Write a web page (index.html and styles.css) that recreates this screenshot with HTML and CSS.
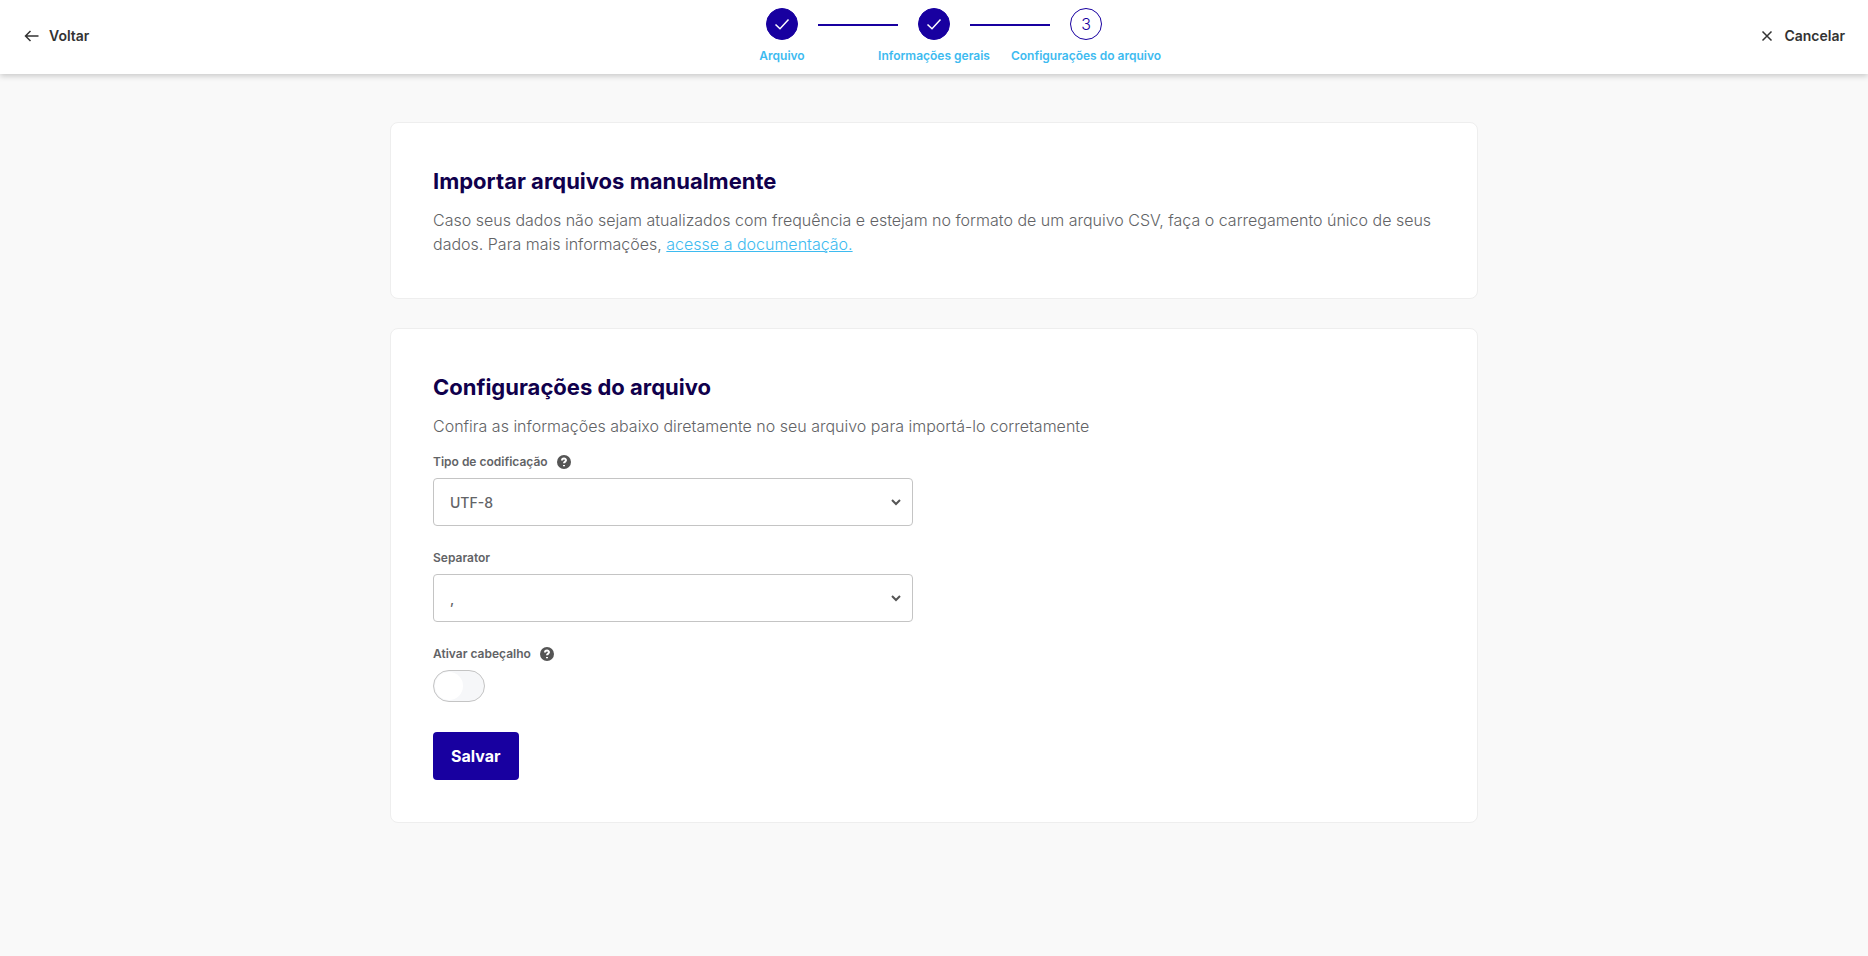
FILE: index.html
```html
<!DOCTYPE html>
<html lang="pt-BR">
<head>
<meta charset="utf-8">
<meta name="viewport" content="width=device-width, initial-scale=1">
<title>Importar arquivos manualmente</title>
<link rel="stylesheet" href="styles.css">
</head>
<body>
<header class="topbar">
  <button class="nav-button" type="button">
    <svg class="nav-icon" viewBox="0 0 16 16" aria-hidden="true"><path d="M15.500 8H2.500M7.500 3 2.500 8 7.500 13"/></svg>
    Voltar
  </button>
  <ol class="steps">
    <li class="step">
      <span class="step-mark step-done"><svg class="check" viewBox="0 0 16 16" aria-hidden="true"><path d="M1.500 8.500 6 12.800 14.500 3.500"/></svg></span>
      <span class="step-label">Arquivo</span>
    </li>
    <li class="step">
      <span class="step-mark step-done"><svg class="check" viewBox="0 0 16 16" aria-hidden="true"><path d="M1.500 8.500 6 12.800 14.500 3.500"/></svg></span>
      <span class="step-label">Informações gerais</span>
    </li>
    <li class="step" aria-current="step">
      <span class="step-mark">3</span>
      <span class="step-label">Configurações do arquivo</span>
    </li>
  </ol>
  <button class="nav-button nav-cancel" type="button">
    <svg class="nav-icon" viewBox="0 0 16 16" aria-hidden="true"><path d="M4.500 3.500l9 9M13.500 3.500l-9 9"/></svg>
    Cancelar
  </button>
</header>
<main class="content">
  <section class="card">
    <h1 class="title">Importar arquivos manualmente</h1>
    <p class="text">Caso seus dados não sejam atualizados com frequência e estejam no formato de um arquivo CSV, faça o carregamento único de seus dados. Para mais informações, <a class="link" href="#">acesse a documentação.</a></p>
  </section>
  <section class="card">
    <h2 class="title">Configurações do arquivo</h2>
    <p class="text">Confira as informações abaixo diretamente no seu arquivo para importá-lo corretamente</p>
    <form class="form">
      <div class="field">
        <div class="label-row">
          <label for="encoding">Tipo de codificação</label>
          <svg class="help" viewBox="0 0 14 14" aria-hidden="true"><circle cx="7" cy="7" r="7"/><path d="M5 5.400C5 2.800 9 2.800 9 5.300 9 6.600 7 6.700 7 8.300M7 10v1.200"/></svg>
        </div>
        <div class="select-wrap">
          <select class="select" id="encoding"><option>UTF-8</option></select>
          <svg class="chevron" viewBox="0 0 12 12" aria-hidden="true"><path d="M2 4l4 4 4-4"/></svg>
        </div>
      </div>
      <div class="field">
        <div class="label-row"><label for="separator">Separator</label></div>
        <div class="select-wrap">
          <select class="select" id="separator"><option>,</option></select>
          <svg class="chevron" viewBox="0 0 12 12" aria-hidden="true"><path d="M2 4l4 4 4-4"/></svg>
        </div>
      </div>
      <div class="field">
        <div class="label-row">
          <label for="header">Ativar cabeçalho</label>
          <svg class="help" viewBox="0 0 14 14" aria-hidden="true"><circle cx="7" cy="7" r="7"/><path d="M5 5.400C5 2.800 9 2.800 9 5.300 9 6.600 7 6.700 7 8.300M7 10v1.200"/></svg>
        </div>
        <input class="toggle" id="header" type="checkbox" role="switch">
      </div>
      <button class="save" type="submit">Salvar</button>
    </form>
  </section>
</main>
</body>
</html>
```
FILE: styles.css
```css
* { box-sizing: border-box; }

body {
  margin: 0;
  min-height: 100vh;
  background: #f9f9f9;
  color: #626366;
  font-family: Inter, "Open Sans", sans-serif;
  font-size: 16px;
}

button, select, input { font: inherit; color: inherit; margin: 0; }

.topbar {
  display: grid;
  grid-template-columns: 1fr auto 1fr;
  align-items: start;
  height: 74px;
  padding: 8px 23px;
  background: #fff;
  box-shadow: 0 2px 6px rgba(0, 0, 0, 0.2);
}

.nav-button {
  display: flex;
  align-items: center;
  gap: 10px;
  height: 55px;
  padding: 0;
  border: 0;
  background: none;
  color: #333;
  font-size: 14px;
  font-weight: 600;
  cursor: pointer;
}
.nav-cancel { justify-self: end; }
.nav-icon {
  width: 16px;
  height: 16px;
  fill: none;
  stroke: #333;
  stroke-width: 1.5;
}

.steps {
  display: flex;
  margin: 0;
  padding: 0;
  list-style: none;
}
.step {
  position: relative;
  display: flex;
  flex-direction: column;
  align-items: center;
  gap: 8px;
  width: 152px;
}
/* Connector between neighbouring step circles */
.step + .step::before {
  content: "";
  position: absolute;
  top: 16px;
  left: -40px;
  width: 80px;
  height: 2px;
  background: #1800a0;
}
.step-mark {
  display: flex;
  align-items: center;
  justify-content: center;
  width: 32px;
  height: 32px;
  border: 1px solid #1800a0;
  border-radius: 50%;
  color: #1800a0;
  font-weight: 300;
}
.step-done { background: #1800a0; }
.check {
  width: 16px;
  height: 16px;
  fill: none;
  stroke: #fff;
  stroke-width: 1.5;
}
.step-label {
  color: #3ebbf0;
  font-size: 12px;
  font-weight: 600;
  line-height: 16px;
  white-space: nowrap;
}

.content {
  display: grid;
  gap: 29px;
  max-width: 1136px;
  margin: 0 auto;
  padding: 48px 24px;
}
.card {
  padding: 42px;
  border: 1px solid #eee;
  border-radius: 8px;
  background: #fff;
}
.title {
  margin: 0 0 11px;
  color: #10004c;
  font-size: 22px;
  font-weight: 700;
  line-height: 32px;
}
.text {
  margin: 0;
  font-weight: 300;
  line-height: 24px;
}
.link { color: #3ebbf0; }

.form {
  display: grid;
  gap: 24px;
  justify-items: start;
  margin-top: 16px;
}
.field {
  display: grid;
  gap: 8px;
  width: 100%;
  max-width: 480px;
}
.label-row {
  display: flex;
  align-items: center;
  gap: 9px;
  font-size: 12px;
  font-weight: 600;
  line-height: 16px;
}
.help { width: 14px; height: 14px; fill: #555; }
.help path { fill: none; stroke: #fff; stroke-width: 2; }

.select-wrap { display: grid; align-items: center; }
.select {
  grid-area: 1 / 1;
  width: 100%;
  height: 48px;
  padding: 0 40px 0 16px;
  border: 1px solid #c4c4c4;
  border-radius: 4px;
  background: #fff;
  font-size: 14px;
  font-weight: 500;
  appearance: none;
}
.chevron {
  grid-area: 1 / 1;
  justify-self: end;
  width: 12px;
  height: 12px;
  margin-right: 11px;
  fill: none;
  stroke: #555;
  stroke-width: 2;
  pointer-events: none;
}

.toggle {
  display: flex;
  align-items: center;
  width: 52px;
  height: 32px;
  border: 1px solid #c4c4c4;
  border-radius: 16px;
  background: #f6f7f9;
  appearance: none;
}
.toggle::before {
  content: "";
  width: 28px;
  height: 28px;
  margin-left: 1px;
  border-radius: 50%;
  background: #fff;
}
.toggle:checked { background: #1800a0; justify-content: flex-end; }

.save {
  height: 48px;
  margin-top: 6px;
  padding: 0 18px;
  border: 0;
  border-radius: 4px;
  background: #1800a0;
  color: #fff;
  font-weight: 700;
  cursor: pointer;
}
```
